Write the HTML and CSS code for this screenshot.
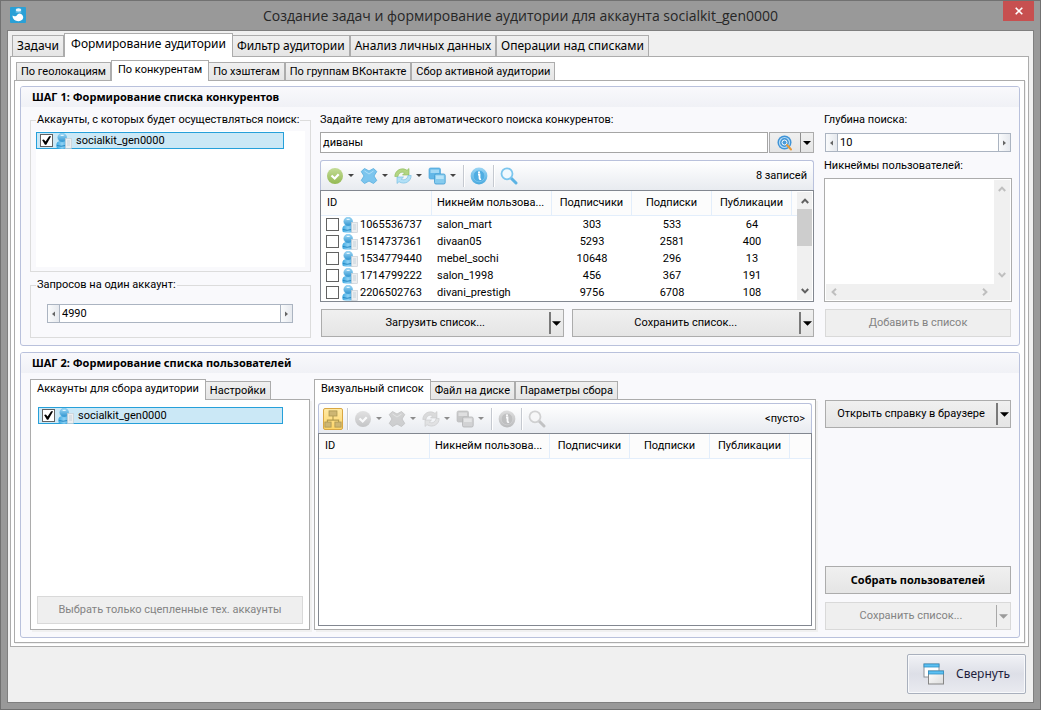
FILE: index.html
```html
<!DOCTYPE html>
<html lang="ru">
<head>
<meta charset="utf-8">
<title>Создание задач и формирование аудитории</title>
<link rel="stylesheet" href="styles.css">
</head>
<body>
<svg class="sprite" aria-hidden="true">
  <defs>
    <linearGradient id="gBlue" x1="0" y1="0" x2="0" y2="1"><stop offset="0" stop-color="#a6dcf8"/><stop offset="1" stop-color="#2d93cf"/></linearGradient>
    <linearGradient id="gBody" x1="0" y1="0" x2="1" y2="0"><stop offset="0" stop-color="#3ba7e0"/><stop offset=".5" stop-color="#8fd2f5"/><stop offset="1" stop-color="#3ba0da"/></linearGradient>
    <linearGradient id="gDisc" x1="0" y1="0" x2="0" y2="1"><stop offset="0" stop-color="#9bd6f5"/><stop offset="1" stop-color="#4aa9de"/></linearGradient>
    <linearGradient id="gGreen" x1="0" y1="0" x2="0" y2="1"><stop offset="0" stop-color="#c4dc97"/><stop offset="1" stop-color="#93b952"/></linearGradient>
    <linearGradient id="gWin" x1="0" y1="0" x2="1" y2="1"><stop offset="0" stop-color="#ffffff"/><stop offset="1" stop-color="#dcdcdc"/></linearGradient>
  </defs>
  <symbol id="i-user" viewBox="0 0 16 16">
    <path d="M.3 13Q0 8.500 4 8H9Q12 8 12 11V15Q6 16.300 .8 15Z" fill="url(#gBody)"/>
    <circle cx="6.200" cy="4.600" r="4.400" fill="url(#gBlue)" stroke="#58b0e0" stroke-width=".5"/>
    <path d="M4.200 2.600Q6.200 1 8.200 2.600Q6.200 3.600 4.200 2.600Z" fill="#e2f5fe"/>
    <path d="M1 12.500Q5 14 9.500 12.500" fill="none" stroke="#2387c2" stroke-width="1"/>
    <rect x="9.500" y="5.500" width="6" height="10" fill="#eceef0" stroke="#c4cad0" stroke-width=".6"/>
    <path d="M11 8H14M11 10H14M11 12H14" stroke="#bccad5" stroke-width=".8"/>
  </symbol>
  <symbol id="i-ok" viewBox="0 0 18 18">
    <circle cx="9" cy="9" r="8" fill="url(#gGreen)"/>
    <path d="M5.500 8.500L8.700 11.500L12.700 7.300" fill="none" stroke="#fff" stroke-width="2.300"/>
  </symbol>
  <symbol id="i-x" viewBox="0 0 18 18">
    <path d="M4.500 1.500L9 4L13.500 1.500L16.800 4.500L14 9L16.800 13.500L13.500 16.500L9 14L4.500 16.500L1.200 13.500L4 9L1.200 4.500Z" fill="#7cc5ee" stroke="#5fb2e0" stroke-width=".9" stroke-linejoin="round"/>
    <path d="M4.500 4L9 7L13.500 4" fill="none" stroke="#b0dff7" stroke-width="1"/>
  </symbol>
  <symbol id="i-refresh" viewBox="0 0 18 18">
    <path d="M.8 9.500C.8 3.500 7.500 -.5 13 3.300L15 1.500V8H8.500L10.700 5.800C7.500 4.300 4.500 6 4 9.500Z" fill="#b3d583" stroke="#8cbc5a" stroke-width=".6"/>
    <path d="M17.200 8.500C17.200 14.500 10.500 18.300 5 14.700L3 16.500V10H9.500L7.300 12.200C10.500 13.700 13.500 12 14 8.500Z" fill="#b2e0f6" stroke="#6bb8df" stroke-width=".6"/>
  </symbol>
  <symbol id="i-copy" viewBox="0 0 18 18">
    <rect x="1" y="1" width="11.500" height="11" rx="1.500" fill="#62b7e7" stroke="#52a8db" stroke-width=".7"/>
    <rect x="2.500" y="2.500" width="8.500" height="3.500" fill="#a3d9f5"/>
    <rect x="6.500" y="7" width="10.700" height="10" rx="1.500" fill="#86cbee" stroke="#3f9bd0" stroke-width=".8"/>
    <rect x="8" y="8.500" width="7.700" height="3.500" fill="#b9e4f8"/>
  </symbol>
  <symbol id="i-info" viewBox="0 0 18 18">
    <circle cx="9" cy="9" r="8.400" fill="url(#gDisc)"/>
    <circle cx="9" cy="9" r="5.800" fill="#4fade2" stroke="#86cdf2" stroke-width=".6"/>
    <path d="M8 7.500H9.500V11Q9.500 12.500 11 12" fill="none" stroke="#fff" stroke-width="1.800"/>
    <circle cx="9" cy="5.300" r="1.100" fill="#fff"/>
  </symbol>
  <symbol id="i-search" viewBox="0 0 18 18">
    <path d="M11 11L16 16" stroke="#5cb3e4" stroke-width="3" stroke-linecap="round"/>
    <circle cx="7" cy="6.800" r="5.500" fill="#f1f9fe" stroke="#7cc6ee" stroke-width="1.800"/>
  </symbol>
  <symbol id="i-tree" viewBox="0 0 16 16">
    <path d="M8 5V9M3 12V9H13V12" fill="none" stroke="#b29a4d" stroke-width="1"/>
    <g fill="#cdb673" stroke="#b09a55" stroke-width=".8"><rect x="4.500" y=".8" width="7" height="4.500"/><rect x=".8" y="10.700" width="5.500" height="4.500"/><rect x="9.700" y="10.700" width="5.500" height="4.500"/></g>
  </symbol>
  <symbol id="i-find" viewBox="0 0 16 16">
    <circle cx="7.500" cy="7.500" r="7" fill="#3f93d6"/>
    <circle cx="7.500" cy="7.500" r="5" fill="none" stroke="#b7dcf5" stroke-width="1.200"/>
    <circle cx="7.500" cy="7.500" r="2.500" fill="#4b9bd8" stroke="#fff" stroke-width="1"/>
    <path d="M10 10L14 14.500" stroke="#e69a3c" stroke-width="2" stroke-linecap="round"/>
  </symbol>
  <symbol id="i-caret" viewBox="0 0 8 4"><path d="M0 0H8L4 4Z" fill="currentColor"/></symbol>
  <symbol id="i-left" viewBox="0 0 3 6"><path d="M3 .5V5.500L0 3Z" fill="currentColor"/></symbol>
  <symbol id="i-right" viewBox="0 0 3 6"><path d="M0 .5V5.500L3 3Z" fill="currentColor"/></symbol>
  <symbol id="i-chev" viewBox="0 0 8 8"><path d="M.8 6L4 2.600L7.200 6" fill="none" stroke="currentColor" stroke-width="2"/></symbol>
</svg>

<div class="window">
  <header class="titlebar">
    <svg class="app-icon" viewBox="0 0 16 16" aria-hidden="true">
      <rect width="16" height="16" rx="1" fill="#2aa0d6"/>
      <ellipse cx="8.500" cy="3" rx="2.800" ry="1.800" fill="#eaf6fc"/>
      <path d="M5.700 5H11.300" stroke="#8cd0ee" stroke-width="1"/>
      <path d="M2.500 8.500Q4.500 10 6.500 8.700Q8.500 5.500 11.200 7Q14.500 9.500 12.500 12.500Q9.500 15.300 5.500 13.500Q2.500 12 2.500 8.500Z" fill="#fff"/>
    </svg>
    <h1 class="title">Создание задач и формирование аудитории для аккаунта socialkit_gen0000</h1>
    <button class="close" type="button" aria-label="Закрыть"><svg viewBox="0 0 8 8" width="8" height="8"><path d="M.7 .7L7.300 7.300M7.300 .7L.7 7.300" stroke="#fff" stroke-width="1.600"/></svg></button>
  </header>

  <main class="client">
    <div class="tabs tabs-main" role="tablist">
      <button class="tab" role="tab" type="button">Задачи</button>
      <button class="tab active" role="tab" type="button" aria-selected="true">Формирование аудитории</button>
      <button class="tab" role="tab" type="button">Фильтр аудитории</button>
      <button class="tab" role="tab" type="button">Анализ личных данных</button>
      <button class="tab" role="tab" type="button">Операции над списками</button>
    </div>
    <div class="page page-main">
      <div class="tabs" role="tablist">
        <button class="tab" role="tab" type="button">По геолокациям</button>
        <button class="tab active" role="tab" type="button" aria-selected="true">По конкурентам</button>
        <button class="tab" role="tab" type="button">По хэштегам</button>
        <button class="tab" role="tab" type="button">По группам ВКонтакте</button>
        <button class="tab" role="tab" type="button">Сбор активной аудитории</button>
      </div>
      <div class="page page-inner">

        <section class="group">
          <h2 class="group-title">ШАГ 1: Формирование списка конкурентов</h2>
          <div class="columns columns-one">
            <div class="col">
              <fieldset class="box box-list">
                <legend>Аккаунты, с которых будет осуществляться поиск:</legend>
                <div class="accounts">
                  <label class="account"><input class="check" type="checkbox" checked><svg class="user"><use href="#i-user"/></svg>socialkit_gen0000</label>
                </div>
              </fieldset>
              <fieldset class="box box-spin">
                <legend><label for="requests">Запросов на один аккаунт:</label></legend>
                <div class="spin">
                  <button type="button" aria-label="Меньше"><svg width="3" height="6"><use href="#i-left"/></svg></button>
                  <input id="requests" type="text" value="4990">
                  <button type="button" aria-label="Больше"><svg width="3" height="6"><use href="#i-right"/></svg></button>
                </div>
              </fieldset>
            </div>

            <div class="col">
              <label class="caption" for="topic">Задайте тему для автоматического поиска конкурентов:</label>
              <div class="query">
                <input class="field" id="topic" type="text" value="диваны">
                <div class="find">
                  <button class="find-main" type="button" aria-label="Найти"><svg width="16" height="16"><use href="#i-find"/></svg></button>
                  <button class="find-more" type="button" aria-label="Варианты поиска"><svg width="8" height="4"><use href="#i-caret"/></svg></button>
                </div>
              </div>
              <div class="grid-panel">
                <div class="toolbar">
                  <div class="pair"><button class="tool" type="button" aria-label="Отметить"><svg><use href="#i-ok"/></svg></button><button class="more" type="button" aria-label="Ещё"><svg><use href="#i-caret"/></svg></button></div>
                  <div class="pair"><button class="tool" type="button" aria-label="Удалить"><svg><use href="#i-x"/></svg></button><button class="more" type="button" aria-label="Ещё"><svg><use href="#i-caret"/></svg></button></div>
                  <div class="pair"><button class="tool" type="button" aria-label="Обновить"><svg><use href="#i-refresh"/></svg></button><button class="more" type="button" aria-label="Ещё"><svg><use href="#i-caret"/></svg></button></div>
                  <div class="pair"><button class="tool" type="button" aria-label="Копировать"><svg><use href="#i-copy"/></svg></button><button class="more" type="button" aria-label="Ещё"><svg><use href="#i-caret"/></svg></button></div>
                  <span class="sep"></span>
                  <button class="tool" type="button" aria-label="Сведения"><svg><use href="#i-info"/></svg></button>
                  <span class="sep"></span>
                  <button class="tool" type="button" aria-label="Поиск"><svg><use href="#i-search"/></svg></button>
                  <span class="count">8 записей</span>
                </div>
                <div class="grid">
                  <div class="grid-scroll">
                    <table>
                      <colgroup><col class="c-id"><col class="c-nick"><col class="c-num"><col class="c-num"><col class="c-num"><col></colgroup>
                      <thead><tr><th>ID</th><th>Никнейм пользова...</th><th>Подписчики</th><th>Подписки</th><th>Публикации</th><th></th></tr></thead>
                      <tbody>
                        <tr><td><label class="row-id"><input class="check" type="checkbox"><svg class="user"><use href="#i-user"/></svg>1065536737</label></td><td>salon_mart</td><td>303</td><td>533</td><td>64</td><td></td></tr>
                        <tr><td><label class="row-id"><input class="check" type="checkbox"><svg class="user"><use href="#i-user"/></svg>1514737361</label></td><td>divaan05</td><td>5293</td><td>2581</td><td>400</td><td></td></tr>
                        <tr><td><label class="row-id"><input class="check" type="checkbox"><svg class="user"><use href="#i-user"/></svg>1534779440</label></td><td>mebel_sochi</td><td>10648</td><td>296</td><td>13</td><td></td></tr>
                        <tr><td><label class="row-id"><input class="check" type="checkbox"><svg class="user"><use href="#i-user"/></svg>1714799222</label></td><td>salon_1998</td><td>456</td><td>367</td><td>191</td><td></td></tr>
                        <tr><td><label class="row-id"><input class="check" type="checkbox"><svg class="user"><use href="#i-user"/></svg>2206502763</label></td><td>divani_prestigh</td><td>9756</td><td>6708</td><td>108</td><td></td></tr>
                      </tbody>
                    </table>
                  </div>
                  <div class="vbar">
                    <svg class="chev"><use href="#i-chev"/></svg>
                    <span class="thumb"></span>
                    <svg class="chev down"><use href="#i-chev"/></svg>
                  </div>
                </div>
              </div>
              <div class="pair-buttons">
                <div class="split"><button class="split-main" type="button">Загрузить список...</button><button class="split-more" type="button" aria-label="Варианты загрузки"><svg width="9" height="5"><use href="#i-caret"/></svg></button></div>
                <div class="split"><button class="split-main" type="button">Сохранить список...</button><button class="split-more" type="button" aria-label="Варианты сохранения"><svg width="9" height="5"><use href="#i-caret"/></svg></button></div>
              </div>
            </div>

            <div class="col col-depth">
              <label class="caption" for="depth">Глубина поиска:</label>
              <div class="spin spin-depth">
                <button type="button" aria-label="Меньше"><svg width="3" height="6"><use href="#i-left"/></svg></button>
                <input id="depth" type="text" value="10">
                <button type="button" aria-label="Больше"><svg width="3" height="6"><use href="#i-right"/></svg></button>
              </div>
              <label class="caption" for="nicks">Никнеймы пользователей:</label>
              <div class="memo">
                <textarea id="nicks"></textarea>
                <div class="memo-v"><svg class="chev"><use href="#i-chev"/></svg><svg class="chev down"><use href="#i-chev"/></svg></div>
                <div class="memo-h"><svg class="chev left"><use href="#i-chev"/></svg><svg class="chev right"><use href="#i-chev"/></svg></div>
              </div>
              <button class="btn" type="button" disabled>Добавить в список</button>
            </div>
          </div>
        </section>

        <section class="group group-two">
          <h2 class="group-title">ШАГ 2: Формирование списка пользователей</h2>
          <div class="columns columns-two">
            <div class="col">
              <div class="tabs tabs-flush" role="tablist">
                <button class="tab active" role="tab" type="button" aria-selected="true">Аккаунты для сбора аудитории</button>
                <button class="tab" role="tab" type="button">Настройки</button>
              </div>
              <div class="page page-accounts">
                <div class="accounts">
                  <label class="account"><input class="check" type="checkbox" checked><svg class="user"><use href="#i-user"/></svg>socialkit_gen0000</label>
                </div>
                <button class="btn" type="button" disabled>Выбрать только сцепленные тех. аккаунты</button>
              </div>
            </div>

            <div class="col">
              <div class="tabs tabs-flush" role="tablist">
                <button class="tab active" role="tab" type="button" aria-selected="true">Визуальный список</button>
                <button class="tab" role="tab" type="button">Файл на диске</button>
                <button class="tab" role="tab" type="button">Параметры сбора</button>
              </div>
              <div class="page page-visual">
                <div class="grid-panel">
                  <div class="toolbar">
                    <button class="tool tool-on" type="button" aria-label="Дерево"><svg><use href="#i-tree"/></svg></button>
                    <span class="sep"></span>
                    <div class="pair"><button class="tool" type="button" aria-label="Отметить" disabled><svg><use href="#i-ok"/></svg></button><button class="more" type="button" aria-label="Ещё" disabled><svg><use href="#i-caret"/></svg></button></div>
                    <div class="pair"><button class="tool" type="button" aria-label="Удалить" disabled><svg><use href="#i-x"/></svg></button><button class="more" type="button" aria-label="Ещё" disabled><svg><use href="#i-caret"/></svg></button></div>
                    <div class="pair"><button class="tool" type="button" aria-label="Обновить" disabled><svg><use href="#i-refresh"/></svg></button><button class="more" type="button" aria-label="Ещё" disabled><svg><use href="#i-caret"/></svg></button></div>
                    <div class="pair"><button class="tool" type="button" aria-label="Копировать" disabled><svg><use href="#i-copy"/></svg></button><button class="more" type="button" aria-label="Ещё" disabled><svg><use href="#i-caret"/></svg></button></div>
                    <span class="sep"></span>
                    <button class="tool" type="button" aria-label="Сведения" disabled><svg><use href="#i-info"/></svg></button>
                    <span class="sep"></span>
                    <button class="tool" type="button" aria-label="Поиск" disabled><svg><use href="#i-search"/></svg></button>
                    <span class="count">&lt;пусто&gt;</span>
                  </div>
                  <div class="grid">
                    <div class="grid-scroll">
                      <table>
                        <colgroup><col class="c-id"><col class="c-nick"><col class="c-num"><col class="c-num"><col class="c-num"><col></colgroup>
                        <thead><tr><th>ID</th><th>Никнейм пользова...</th><th>Подписчики</th><th>Подписки</th><th>Публикации</th><th></th></tr></thead>
                      </table>
                    </div>
                  </div>
                </div>
              </div>
            </div>

            <div class="col actions">
              <div class="split"><button class="split-main" type="button">Открыть справку в браузере</button><button class="split-more" type="button" aria-label="Варианты справки"><svg width="9" height="5"><use href="#i-caret"/></svg></button></div>
              <button class="btn btn-strong" type="button">Собрать пользователей</button>
              <div class="split split-off"><button class="split-main" type="button" disabled>Сохранить список...</button><button class="split-more" type="button" aria-label="Варианты сохранения" disabled><svg width="9" height="5"><use href="#i-caret"/></svg></button></div>
            </div>
          </div>
        </section>
      </div>
    </div>

    <footer class="footer">
      <button class="minimize" type="button">
        <svg width="22" height="22" viewBox="0 0 22 22" aria-hidden="true">
          <rect x="1" y="1" width="15" height="13" fill="#fff" stroke="#8b9299"/>
          <rect x="1" y="1" width="15" height="3" fill="#5cc0f2" stroke="#2f8fc4" stroke-width=".8"/>
          <rect x="5.500" y="8" width="15" height="13" fill="url(#gWin)" stroke="#868686"/>
          <rect x="5.500" y="8" width="15" height="3" fill="#5cc0f2" stroke="#2f8fc4" stroke-width=".8"/>
        </svg>
        Свернуть
      </button>
    </footer>
  </main>
</div>
</body>
</html>
```
FILE: styles.css
```css
* { box-sizing: border-box; }

body {
  margin: 0;
  font: 11px/14px Roboto, "Noto Sans", sans-serif;
  color: #000;
}

button, input, textarea {
  font: inherit;
  color: inherit;
  margin: 0;
  padding: 0;
  border: 0;
  background: none;
  border-radius: 0;
  outline: 0;
}

svg { display: block; flex: none; }
.sprite { position: absolute; width: 0; height: 0; }

/* Window frame */
.window {
  min-height: 100vh;
  display: flex;
  flex-direction: column;
  padding: 0 6px 6px;
  border: 1px solid #717171;
  background: #999;
}
.titlebar {
  display: grid;
  grid-template-columns: 1fr auto 1fr;
  height: 29px;
}
.app-icon { width: 16px; height: 16px; margin: 6px 3px; }
.title {
  margin: 0;
  font: 14px/29px "Open Sans", "Noto Sans", sans-serif;
  color: #262626;
}
.close {
  justify-self: end;
  display: grid;
  place-items: center;
  width: 31px;
  height: 20px;
  background: #c75050;
}
.client {
  flex: 1;
  display: flex;
  flex-direction: column;
  padding: 2px 4px 0 2px;
  border: 1px solid #7f7f7f;
  background: #f0f0f0;
}

/* Tabs */
.tabs { display: flex; align-items: flex-end; padding-left: 2px; }
.tabs-flush { padding-left: 0; }
.tab {
  padding: 0 4px;
  border: 1px solid #acacac;
  border-bottom: 0;
  background: linear-gradient(#f0f0f0, #e5e5e5);
  line-height: 17px;
  white-space: nowrap;
}
.tab.active {
  position: relative;
  padding: 0 6px 3px;
  margin: 0 -1px -1px 0;
  background: #fff;
}
.tabs-main .tab { font-family: "Noto Sans", sans-serif; font-size: 12px; line-height: 20px; }
.page {
  flex: 1;
  display: flex;
  flex-direction: column;
  border: 1px solid #acacac;
  background: #fff;
}
.page-main { padding: 3px; }
.page-inner { gap: 6px; padding: 5px 4px 4px 5px; box-shadow: 1px 1px #f0f0f0; }

/* Step groups */
.group {
  display: flex;
  flex-direction: column;
  border: 1px solid #b9c1dc;
  border-radius: 3px;
  background: #f9f9fc;
}
.group-two { flex: 1; }
.group-title {
  margin: 0;
  padding: 0 11px;
  font-family: "Noto Sans", sans-serif;
  font-size: 11px;
  line-height: 20px;
  border-radius: 2px 2px 0 0;
  background: linear-gradient(#f9f9fc, #f0f1f6);
}
.columns { flex: 1; display: grid; padding: 6px 7px 7px 9px; }
.columns-one { grid-template-columns: 281px minmax(0, 1fr) 188px; column-gap: 9px; }
.columns-two { grid-template-columns: 280px minmax(0, 1fr) 192px; column-gap: 4px; }
.col { display: flex; flex-direction: column; min-width: 0; }
.columns-one { column-gap: 10px; grid-template-columns: 280px minmax(0, 1fr) 188px; }

.box {
  min-width: 0;
  margin: 0 -1px 0 0;
  border: 1px solid #dcdcdc;
}
.box legend { padding: 0 1px; white-space: nowrap; }
.box-list { padding: 4px 5px; margin-bottom: 6px; }
.box-spin { padding: 12px 17px 14px 16px; }
.box-spin legend { margin-left: -11px; }
.accounts { padding-top: 1px; background: #fff; }
.box-list .accounts { height: 136px; }
.account {
  display: flex;
  align-items: center;
  width: 248px;
  height: 17px;
  padding-left: 3px;
  border: 1px solid #26a0da;
  background: #cbe8f6;
}
.check {
  appearance: none;
  flex: none;
  width: 13px;
  height: 13px;
  border: 1px solid #626262;
  background: #fff;
}
.check:checked::before {
  content: "";
  display: block;
  height: 11px;
  background: #000;
  clip-path: polygon(10% 45%, 26% 40%, 42% 60%, 74% 12%, 92% 12%, 48% 88%, 36% 88%);
}
.user { width: 16px; height: 16px; }
.account .user { margin: 0 4px 0 3px; }

.spin { display: flex; height: 19px; border: 1px solid #abb4c1; background: #fff; }
.spin input { flex: 1; min-width: 0; padding: 0 2px; }
.spin button {
  display: grid;
  place-items: center;
  width: 12px;
  color: #666;
  background: linear-gradient(90deg, #fafbfc, #e6e9ee);
}
.spin button:first-child { border-right: 1px solid #abb4c1; }
.spin button:last-child { border-left: 1px solid #abb4c1; }
.spin-depth { margin: 6px 1px 7px; }

.caption { white-space: nowrap; }
.query { display: flex; gap: 1px; margin: 5px 0 7px; }
.field { flex: 1; min-width: 0; height: 21px; padding: 0 2px; border: 1px solid #a5a5a5; background: #fff; }
.find { display: flex; border: 1px solid #acacac; background: linear-gradient(#f0f0f0, #e5e5e5); }
.find button { display: grid; place-items: center; }
.find-main { width: 30px; }
.find-more { width: 13px; border-left: 1px solid #8e8e8e; }

/* Record lists */
.grid-panel { display: flex; flex-direction: column; }
.page-visual .grid-panel { flex: 1; }
.toolbar {
  display: flex;
  align-items: center;
  height: 30px;
  padding: 0 6px 0 4px;
  border: 1px solid #b9c1dc;
  border-bottom: 0;
  border-radius: 3px 3px 0 0;
  background: linear-gradient(#fff, #e8ebf0);
}
.pair { display: flex; margin-right: 2px; }
.pair:has(+ .sep) { margin-right: 0; }
.tool { display: grid; place-items: center; width: 20px; height: 22px; }
.tool svg { width: 18px; height: 18px; }
.more { display: grid; place-items: center; width: 12px; color: #444; }
.more svg { width: 6px; height: 3px; }
.tool:disabled svg { filter: grayscale(1); opacity: .6; }
.more:disabled { color: #8c8c8c; }
.tool-on { border: 1px solid #d9a743; border-radius: 2px; background: linear-gradient(#ffe9a3, #fdd568); }
.sep { width: 2px; height: 22px; margin: 0 4px; border-left: 1px solid #c5c9d0; border-right: 1px solid #fff; }
.count { margin-left: auto; }
.grid { flex: 1; display: flex; border: 1px solid #828790; background: #fff; }
.grid-scroll { flex: 1; min-width: 0; overflow: hidden; }
table { width: 100%; table-layout: fixed; border-collapse: separate; border-spacing: 0; }
.c-id { width: 111px; }
.c-nick { width: 120px; }
.c-num { width: 80px; }
th, td { padding: 0; height: 17px; text-align: center; font-weight: 400; white-space: nowrap; }
th { height: 25px; border: solid #e3eefb; border-width: 0 1px 1px 0; background: #fcfcfc; }
th:last-child { border-right: 0; }
th:nth-child(-n+2), td:nth-child(-n+2) { padding-left: 5px; text-align: left; }
th:first-child { padding-left: 6px; }
.row-id { display: flex; align-items: center; height: 17px; }
.row-id .user { margin: 0 2px 0 3px; }
.vbar { display: flex; flex-direction: column; width: 15px; margin: 1px 1px 1px 0; padding: 5px 0; align-items: center; color: #606060; background: #f0f0f0; }
.chev { width: 8px; height: 8px; }
.down { margin-top: auto; transform: rotate(180deg); }
.thumb { width: 15px; height: 37px; margin-top: 4px; background: #cdcdcd; }

/* Buttons */
.btn, .split { height: 28px; border: 1px solid #acacac; background: linear-gradient(#f0f0f0, #e5e5e5); }
.btn:disabled, .split-off { border-color: #d9d9d9; background: #efefef; color: #838383; }
.btn-strong { font-family: "Noto Sans", sans-serif; font-weight: 700; }
.split { display: flex; padding: 2px 0; }
.split-main { flex: 1; }
.split-more { display: grid; place-items: center; width: 14px; border-left: 2px solid #7a7a7a; }
.split-off .split-more { border-left: 1px solid #a8a8a8; color: #9a9a9a; }
.pair-buttons { display: flex; gap: 8px; margin-top: 7px; padding-left: 1px; }
.pair-buttons .split { flex: 1; }

.memo {
  display: grid;
  grid-template: 1fr 16px / 1fr 16px;
  height: 124px;
  margin: 5px 0 7px;
  padding: 1px;
  border: 1px solid #acacac;
  background: #fff;
}
.memo textarea { resize: none; width: 100%; height: 100%; overflow: hidden; }
.memo-v, .memo-h { display: flex; align-items: center; color: #bfbfbf; background: #f0f0f0; }
.memo-v { flex-direction: column; padding: 5px 0; }
.memo-h { grid-column: 1 / 3; padding: 0 21px 0 4px; }
.left { transform: rotate(-90deg); }
.right { margin-left: auto; transform: rotate(90deg); }
.col-depth .btn { margin: 0 1px; }

.page-accounts { padding: 6px 6px 5px; box-shadow: 2px 2px #f0f0f0; }
.page-accounts .accounts { padding: 1px 1px 0; }
.page-accounts .account { width: 245px; }
.page-accounts .btn { margin-top: auto; }
.page-visual { padding: 3px; box-shadow: 2px 2px #f0f0f0; }
.actions { gap: 8px; padding: 21px 1px 0 5px; }
.actions .btn-strong { margin-top: auto; }

/* Footer */
.footer { display: flex; justify-content: flex-end; padding: 7px 3px 8px; }
.minimize {
  display: flex;
  align-items: center;
  gap: 11px;
  height: 40px;
  padding: 0 15px;
  border: 1px solid #a9b0bd;
  border-radius: 2px;
  background: linear-gradient(#f1f2f6, #dddfe7 50%, #e9eaf0);
  box-shadow: inset 0 0 0 1px #f8f9fb;
  color: #1e1e3c;
  font: 12px/16px "Noto Sans", sans-serif;
}
```
